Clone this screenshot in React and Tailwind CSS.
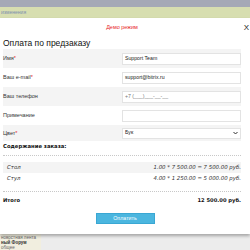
import React from 'react';

const labelFont = { fontFamily: '"Liberation Sans", Arial, sans-serif' };

const fields = [
    { label: 'Имя', required: true, value: 'Support Team', h: 'h-[19px]', bg: 'bg-[#f4f4f4]' },
    { label: 'Ваш e-mail', required: true, value: 'support@bitrix.ru', h: 'h-[19px]', bg: 'bg-white' },
    { label: 'Ваш телефон', required: false, value: '+7 (___)___-__-__', muted: true, h: 'h-[19px]', bg: 'bg-[#f4f4f4]' },
    { label: 'Примечание', required: false, value: '', h: 'h-[19px]', bg: 'bg-white' },
];

const items = [
    { name: 'Стол', calc: '1.00 * 7 500.00 = 7 500.00 руб.', bg: 'bg-[#f4f4f4]' },
    { name: 'Стул', calc: '4.00 * 1 250.00 = 5 000.00 руб.', bg: 'bg-white' },
];

const App = () => {
    return (
        <div className="w-[250px] h-[250px] overflow-hidden bg-[#ececec] flex flex-col font-['Liberation_Sans',Arial,sans-serif]">
            {/* page behind the popup */}
            <div className="h-[7px] bg-[#a5a9b6] shrink-0"></div>
            <div className="h-[11px] bg-[#d7deb0] shrink-0 text-[5px] leading-[11px] text-[#7d8fae] pl-[1px]">изменения</div>

            {/* popup */}
            <div className="relative bg-white shadow-[0_2px_3px_rgba(0,0,0,0.3)] shrink-0 z-10 pl-[3px] pr-[9px] pb-[10px]">
                <div className="h-[19px] flex items-center justify-center text-[5.5px] text-[#e8262a]">Демо режим</div>
                <div className="absolute right-[1px] top-[6px] text-[8px] leading-[8px] text-[#222]">X</div>
                <div className="h-[12px] leading-[12px] text-[8.5px] text-[#111]">Оплата по предзаказу</div>

                <div className="flex flex-col">
                    {fields.map(f => (
                        <div key={f.label} className={`${f.h} ${f.bg} flex items-center`}>
                            <div className="w-[119px] text-[5.5px] text-[#333]" style={labelFont}>
                                {f.label}{f.required && <span className="text-[#e8262a]">*</span>}
                            </div>
                            <div className="flex-1 h-[12px] bg-white border border-[#e3e3e3] flex items-center px-[2px] text-[5.2px]" style={labelFont}>
                                <span className={f.muted ? 'text-[#777]' : 'text-[#222]'}>{f.value}</span>
                            </div>
                        </div>
                    ))}
                    <div className="h-[16px] bg-[#f4f4f4] flex items-center">
                        <div className="w-[119px] text-[5.5px] text-[#333]" style={labelFont}>
                            Цвет<span className="text-[#e8262a]">*</span>
                        </div>
                        <div className="flex-1 h-[11px] bg-white border border-[#e3e3e3] flex items-center justify-between px-[2px] text-[5.2px] text-[#222]" style={labelFont}>
                            <span>Бук</span>
                            <svg width="5" height="4" viewBox="0 0 10 8">
                                <path d="M1 2 L5 6 L9 2" stroke="#333" strokeWidth="2" fill="none" />
                            </svg>
                        </div>
                    </div>
                </div>

                <div className="font-['DejaVu_Sans',Verdana,sans-serif]">
                    <div className="h-[8px] leading-[8px] mt-[1px] text-[5.3px] font-bold text-[#111]">Содержание заказа:</div>
                    <div className="mt-[5px] border-t border-dotted border-[#c8c8c8]"></div>

                    <div className="mt-[6px]">
                        {items.map(it => (
                            <div key={it.name} className={`${it.bg} h-[11px] flex items-center justify-between pl-[4px] text-[5.4px] italic text-[#333]`}>
                                <span>{it.name}</span>
                                <span>{it.calc}</span>
                            </div>
                        ))}
                    </div>

                    <div className="mt-[7px] border-t border-dotted border-[#c8c8c8]"></div>
                    <div className="mt-[4px] h-[10px] flex items-center justify-between text-[5.2px] font-bold text-[#111]">
                        <span>Итого</span>
                        <span>12 500.00 руб.</span>
                    </div>
                </div>

                <div className="mt-[7px] flex justify-center pl-[6px]">
                    <button className="w-[59px] h-[11px] bg-[#4bb6df] border border-[#3aa7d3] text-white text-[5.3px] flex items-center justify-center">
                        Оплатить
                    </button>
                </div>
            </div>

            {/* page bottom */}
            <div className="flex-1 flex">
                <div className="w-[41px] bg-[#f1eedf] text-[4.5px] leading-[5px] text-[#333] pt-[1px] pl-[1px]">
                    <div className="text-[#666]">новостная лента</div>
                    <div className="font-bold">ный Форум</div>
                    <div className="text-[#666]">общее</div>
                </div>
                <div className="flex-1"></div>
            </div>
        </div>
    );
};

export default App;
